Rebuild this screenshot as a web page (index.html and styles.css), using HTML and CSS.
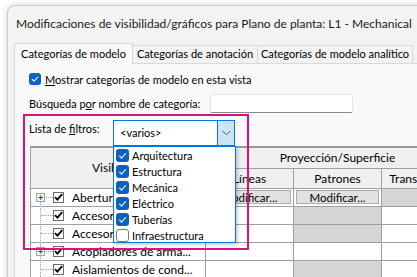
FILE: index.html
```html
<!DOCTYPE html>
<html lang="es">
<head>
    <meta charset="UTF-8">
    <title>Modificaciones de visibilidad/gráficos</title>
    <link rel="stylesheet" href="styles.css">
</head>
<body>
    <div class="window">
        <div class="titlebar">Modificaciones de visibilidad/gráficos para Plano de planta: L1 - Mechanical</div>

        <div class="tabs">
            <div class="tab tab-model active">Categorías de modelo</div>
            <div class="tab tab-annot">Categorías de anotación</div>
            <div class="tab tab-analytic">Categorías de modelo analítico</div>
        </div>

        <div class="panel">
            <div class="show-row">
                <span class="win-check on">
                    <svg width="12" height="12" viewBox="0 0 12 12"><path d="M3 6.2l2 2 4-4.4" fill="none" stroke="#fff" stroke-width="1.1"/></svg>
                </span>
                <span><u>M</u>ostrar categorías de modelo en esta vista</span>
            </div>

            <div class="search-row">
                <span class="search-label">Búsqueda p<u>o</u>r nombre de categoría:</span>
                <span class="search-input"></span>
            </div>

            <div class="filter-row">
                <span class="filter-label">Lista de <u>f</u>iltros:</span>
                <div class="combo">
                    <span class="combo-text">&lt;varios&gt;</span>
                    <span class="combo-btn">
                        <svg width="9" height="6" viewBox="0 0 9 6"><path d="M0.5 0.8l4 4 4-4" fill="none" stroke="#555" stroke-width="1"/></svg>
                    </span>
                    <div class="combo-list">
                        <div class="combo-item"><span class="list-check on"><svg width="13" height="13" viewBox="0 0 13 13"><path d="M3.3 6.8l2.2 2.2 4.2-4.6" fill="none" stroke="#fff" stroke-width="1.1"/></svg></span>Arquitectura</div>
                        <div class="combo-item"><span class="list-check on"><svg width="13" height="13" viewBox="0 0 13 13"><path d="M3.3 6.8l2.2 2.2 4.2-4.6" fill="none" stroke="#fff" stroke-width="1.1"/></svg></span>Estructura</div>
                        <div class="combo-item"><span class="list-check on"><svg width="13" height="13" viewBox="0 0 13 13"><path d="M3.3 6.8l2.2 2.2 4.2-4.6" fill="none" stroke="#fff" stroke-width="1.1"/></svg></span>Mecánica</div>
                        <div class="combo-item"><span class="list-check on"><svg width="13" height="13" viewBox="0 0 13 13"><path d="M3.3 6.8l2.2 2.2 4.2-4.6" fill="none" stroke="#fff" stroke-width="1.1"/></svg></span>Eléctrico</div>
                        <div class="combo-item"><span class="list-check on"><svg width="13" height="13" viewBox="0 0 13 13"><path d="M3.3 6.8l2.2 2.2 4.2-4.6" fill="none" stroke="#fff" stroke-width="1.1"/></svg></span>Tuberías</div>
                        <div class="combo-item"><span class="list-check"></span>Infraestructura</div>
                    </div>
                </div>
            </div>

            <table class="grid">
                <colgroup>
                    <col class="col-vis">
                    <col class="col-std">
                    <col class="col-std">
                    <col class="col-std">
                </colgroup>
                <tr class="head-top">
                    <th rowspan="2">Visibilidad</th>
                    <th colspan="3">Proyección/Superficie</th>
                </tr>
                <tr class="head-sub">
                    <th>Líneas</th>
                    <th>Patrones</th>
                    <th>Transparencia</th>
                </tr>
                <tr class="row-first">
                    <td><div class="vis"><span class="tree first expand"><span class="plus">+</span></span><span class="xp-check"><svg width="9" height="9" viewBox="0 0 9 9"><path d="M1 4.2l2.4 2.4 4.8-5.4" fill="none" stroke="#000" stroke-width="1.8"/></svg></span>Aberturas</div></td>
                    <td><span class="mod-btn">Modificar...</span></td>
                    <td><span class="mod-btn">Modificar...</span></td>
                    <td class="hatch"></td>
                </tr>
                <tr>
                    <td><div class="vis"><span class="tree"></span><span class="xp-check"><svg width="9" height="9" viewBox="0 0 9 9"><path d="M1 4.2l2.4 2.4 4.8-5.4" fill="none" stroke="#000" stroke-width="1.8"/></svg></span>Accesorios</div></td>
                    <td></td>
                    <td class="hatch"></td>
                    <td></td>
                </tr>
                <tr>
                    <td><div class="vis"><span class="tree"></span><span class="xp-check"><svg width="9" height="9" viewBox="0 0 9 9"><path d="M1 4.2l2.4 2.4 4.8-5.4" fill="none" stroke="#000" stroke-width="1.8"/></svg></span>Accesorios</div></td>
                    <td></td>
                    <td class="hatch"></td>
                    <td></td>
                </tr>
                <tr>
                    <td><div class="vis"><span class="tree expand"><span class="plus">+</span></span><span class="xp-check"><svg width="9" height="9" viewBox="0 0 9 9"><path d="M1 4.2l2.4 2.4 4.8-5.4" fill="none" stroke="#000" stroke-width="1.8"/></svg></span>Acopladores de arma...</div></td>
                    <td></td>
                    <td></td>
                    <td></td>
                </tr>
                <tr>
                    <td><div class="vis"><span class="tree"></span><span class="xp-check"><svg width="9" height="9" viewBox="0 0 9 9"><path d="M1 4.2l2.4 2.4 4.8-5.4" fill="none" stroke="#000" stroke-width="1.8"/></svg></span>Aislamientos de cond...</div></td>
                    <td></td>
                    <td class="hatch"></td>
                    <td></td>
                </tr>
            </table>
        </div>
    </div>

    <!-- highlight frame drawn over the dialog -->
    <div class="highlight"></div>
</body>
</html>
```

FILE: styles.css
```css
/* General Reset */
* {
    margin: 0;
    padding: 0;
    box-sizing: border-box;
}

body {
    width: 417px;
    height: 277px;
    overflow: hidden;
    background: #ffffff;
    font-family: 'Lato', 'Noto Sans', sans-serif;
    font-size: 11px;
    color: #000;
    position: relative;
}

/* Dialog window */
.window {
    margin: 5px 0 0 7px;
    width: 620px;
    height: 400px;
    background: #f3f3f3;
    border: 1px solid #c9c9c9;
    border-radius: 8px 0 0 0;
    box-shadow: 0 0 6px rgba(0, 0, 0, 0.18);
}

.titlebar {
    height: 37px;
    line-height: 35px;
    padding-left: 8px;
    font-size: 12px;
    color: #1b1b1b;
    white-space: nowrap;
}

/* Tabs */
.tabs {
    display: flex;
    align-items: flex-end;
    height: 20px;
    margin-left: 6px;
}

.tab {
    height: 18px;
    line-height: 16px;
    text-align: center;
    border: 1px solid #d9d9d9;
    border-bottom: none;
    white-space: nowrap;
    background: #f3f3f3;
}

.tab.active {
    height: 21px;
    margin-bottom: -1px;
    line-height: 20px;
    background: #f9f9f9;
    position: relative;
    z-index: 1;
}

.tab-model { width: 119px; }
.tab-annot { width: 125px; border-left: none; }
.tab-analytic { width: 155px; border-left: none; }

/* Tab panel */
.panel {
    margin-left: 6px;
    height: 300px;
    background: #f9f9f9;
    border: 1px solid #d9d9d9;
    padding: 7px 0 0 14px;
}

.show-row {
    display: flex;
    align-items: center;
    gap: 4px;
    height: 16px;
}

.win-check {
    width: 12px;
    height: 12px;
    border-radius: 3px;
    background: #0a63c4;
    display: flex;
}

.search-row {
    display: flex;
    align-items: center;
    margin-top: 7px;
    height: 19px;
}

.search-label {
    width: 181px;
    white-space: nowrap;
}

.search-input {
    width: 143px;
    height: 19px;
    background: #fff;
    border: 1px solid #e5e5e5;
    border-bottom-color: #8a8a8a;
    border-radius: 2px;
}

.filter-row {
    display: flex;
    margin-top: 7px;
    height: 26px;
}

.filter-label {
    width: 84px;
    line-height: 18px;
    white-space: nowrap;
}

/* Combo box with its open list */
.combo {
    position: relative;
    width: 122px;
    height: 26px;
    background: #fff;
    border: 1px solid #0078d7;
    display: flex;
}

.combo-text {
    flex: 1;
    padding-left: 6px;
    line-height: 24px;
}

.combo-btn {
    width: 17px;
    background: #cce4f7;
    border-left: 1px solid #0078d7;
    display: flex;
    align-items: center;
    justify-content: center;
}

.combo-list {
    position: absolute;
    top: 25px;
    left: -1px;
    width: 123px;
    height: 97px;
    background: #fff;
    border: 1px solid #0078d7;
    box-shadow: 2px 2px 3px rgba(0, 0, 0, 0.2);
    z-index: 5;
}

.combo-item {
    display: flex;
    align-items: center;
    gap: 3px;
    height: 16px;
    padding-left: 2px;
}

.list-check {
    width: 13px;
    height: 13px;
    border-radius: 3px;
    border: 1px solid #7a7a7a;
    background: #fff;
    display: flex;
}

.list-check.on {
    border: none;
    background: #0a63c4;
}

/* Visibility grid */
.grid {
    margin-left: 1px;
    border-collapse: collapse;
    table-layout: fixed;
    width: 439px;
    background: #fff;
}

.col-vis { width: 175px; }
.col-std { width: 88px; }

.grid th {
    background: #f0f0f0;
    font-weight: normal;
    border: 1px solid #a0a0a0;
    white-space: nowrap;
    overflow: hidden;
    font-size: 12px;
}

.grid th[rowspan] { text-align: left; padding-left: 61px; }

.grid tr.head-top th { border-top: 2px solid #9a9a9a; }
.head-top { height: 21px; }
.head-sub { height: 20px; }

.grid td {
    border: 1px solid #a0a0a0;
    height: 18px;
    padding: 0;
    white-space: nowrap;
    overflow: hidden;
    font-size: 12px;
}

.row-first td { height: 17px; }

.vis {
    display: flex;
    align-items: center;
    height: 17px;
}

.hatch {
    background: repeating-conic-gradient(#acacac 0 25%, #ffffff 0 50%) 0 0 / 2px 2px;
}

.tree {
    position: relative;
    flex: none;
    width: 22px;
    height: 17px;
}

.tree::before {
    content: "";
    position: absolute;
    left: 9px;
    top: -1px;
    bottom: -1px;
    border-left: 1px dotted #a0a0a0;
}

.tree.first::before { top: 8px; }

.tree::after {
    content: "";
    position: absolute;
    left: 10px;
    right: 0;
    top: 8px;
    border-top: 1px dotted #a0a0a0;
}

.plus {
    position: absolute;
    left: 5px;
    top: 4px;
    width: 9px;
    height: 9px;
    border: 1px solid #9aa4b4;
    background: #f4f6fa;
    color: #1f3d99;
    font-size: 9px;
    line-height: 7px;
    text-align: center;
    font-weight: bold;
    z-index: 1;
}

.xp-check {
    flex: none;
    width: 11px;
    height: 11px;
    border: 1px solid #6d6d6d;
    background: #fff;
    display: flex;
    align-items: center;
    justify-content: center;
    margin-right: 8px;
}

.mod-btn {
    display: block;
    margin: 1px 2px;
    height: 14px;
    line-height: 13px;
    text-align: center;
    background: #e1e1e1;
    border: 1px solid #adadad;
    font-size: 11.5px;
}

/* Red annotation frame */
.highlight {
    position: absolute;
    left: 23px;
    top: 114px;
    width: 226px;
    height: 136px;
    border: 2px solid #e0127a;
    z-index: 10;
}
```
